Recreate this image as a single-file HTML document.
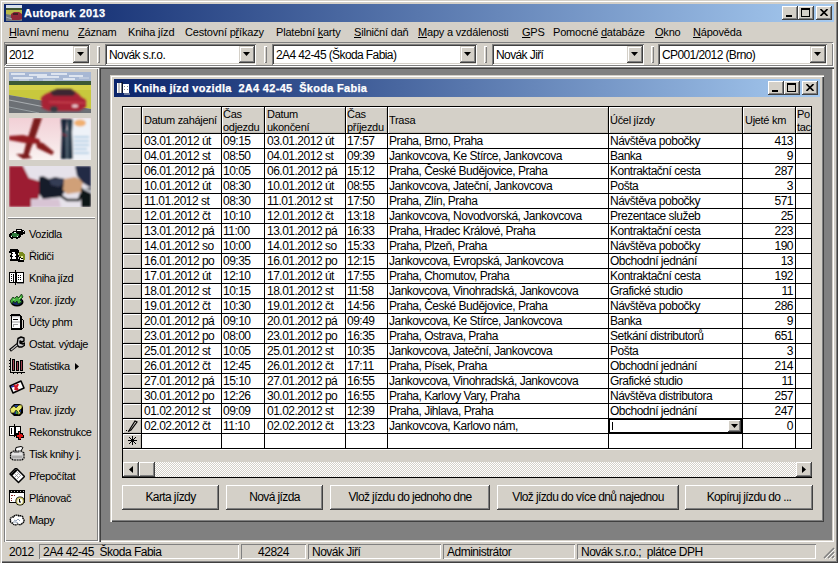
<!DOCTYPE html><html><head><meta charset="utf-8"><style>
*{box-sizing:border-box;margin:0;padding:0}
html,body{width:838px;height:563px;overflow:hidden}
body{position:relative;background:#D4D0C8;font-family:"Liberation Sans",sans-serif;font-size:11px;color:#000}
.a{position:absolute}
.t{position:absolute;white-space:nowrap;line-height:13px;font-size:12px;letter-spacing:-0.5px}
.rb{position:absolute;background:#D4D0C8;box-shadow:inset -1px -1px #404040,inset 1px 1px #fff,inset -2px -2px #808080}
.rb2{position:absolute;background:#D4D0C8;box-shadow:inset -1px -1px #404040,inset 1px 1px #D4D0C8,inset -2px -2px #808080,inset 2px 2px #fff}
.cmb{position:absolute;background:#fff;box-shadow:inset 1px 1px #808080,inset -1px -1px #fff,inset 2px 2px #404040,inset -2px -2px #D4D0C8}
.grip{position:absolute;width:3px;box-shadow:inset 1px 1px #fff,inset -1px -1px #808080}
.ln{position:absolute;background:#000}
.w{color:#fff}
.u{position:absolute;height:1px;background:#000}
</style></head><body>
<div class="a" style="left:0px;top:0px;width:838px;height:563px;box-shadow:inset 1px 1px #D4D0C8,inset 2px 2px #fff,inset -1px -1px #404040,inset -2px -2px #808080"></div>
<div class="a" style="left:4px;top:4px;width:830px;height:18px;background:linear-gradient(to right,#0A246A,#A6CAF0)"></div>
<svg class="a" style="left:6px;top:5px" width="16" height="16" viewBox="0 0 16 16"><rect width="16" height="16" fill="#707880"/><rect width="16" height="3" fill="#d8e0ec"/><rect y="3" width="16" height="2" fill="#3a5030"/><path d="M0 5H16V12L0 9Z" fill="#b8b848"/><path d="M5 9L8 7H13L16 9V14L13 15H6L5 13Z" fill="#902838"/><path d="M7 8h5v2H7z" fill="#402028"/><path d="M0 12L6 14" stroke="#a0a8b0"/></svg>
<div class="t" style="left:24px;top:6px;color:#fff;font-weight:bold;font-size:11px;line-height:14px;letter-spacing:0.45px;-webkit-text-stroke:0.25px #fff">Autopark 2013</div>
<div class="rb" style="left:782px;top:6px;width:16px;height:14px"></div>
<div class="a" style="left:786px;top:15px;width:6px;height:2px;background:#000"></div>
<div class="rb" style="left:798px;top:6px;width:16px;height:14px"></div>
<div class="a" style="left:801px;top:8px;width:9px;height:9px;border:1px solid #000;border-top-width:2px"></div>
<div class="rb" style="left:816px;top:6px;width:16px;height:14px"></div>
<svg class="a" style="left:820px;top:9px" width="8" height="7" viewBox="0 0 8 7"><path d="M0.5 0 L7.5 7 M7.5 0 L0.5 7" stroke="#000" stroke-width="1.6"/></svg>
<div class="t" style="left:9px;top:26px;font-size:11px;letter-spacing:-0.2px"><span style="text-decoration:underline;text-underline-offset:1px">H</span>lavní menu</div>
<div class="t" style="left:78px;top:26px;font-size:11px;letter-spacing:-0.2px"><span style="text-decoration:underline;text-underline-offset:1px">Z</span>áznam</div>
<div class="t" style="left:128px;top:26px;font-size:11px;letter-spacing:-0.2px">Kniha <span style="text-decoration:underline;text-underline-offset:1px">j</span>ízd</div>
<div class="t" style="left:185px;top:26px;font-size:11px;letter-spacing:-0.2px">Cestovní p<span style="text-decoration:underline;text-underline-offset:1px">ř</span>íkazy</div>
<div class="t" style="left:276px;top:26px;font-size:11px;letter-spacing:-0.2px">Platební <span style="text-decoration:underline;text-underline-offset:1px">k</span>arty</div>
<div class="t" style="left:354px;top:26px;font-size:11px;letter-spacing:-0.2px"><span style="text-decoration:underline;text-underline-offset:1px">S</span>ilniční daň</div>
<div class="t" style="left:418px;top:26px;font-size:11px;letter-spacing:-0.2px"><span style="text-decoration:underline;text-underline-offset:1px">M</span>apy a vzdálenosti</div>
<div class="t" style="left:522px;top:26px;font-size:11px;letter-spacing:-0.2px"><span style="text-decoration:underline;text-underline-offset:1px">G</span>PS</div>
<div class="t" style="left:553px;top:26px;font-size:11px;letter-spacing:-0.2px">Pomocné <span style="text-decoration:underline;text-underline-offset:1px">d</span>atabáze</div>
<div class="t" style="left:655px;top:26px;font-size:11px;letter-spacing:-0.2px"><span style="text-decoration:underline;text-underline-offset:1px">O</span>kno</div>
<div class="t" style="left:693px;top:26px;font-size:11px;letter-spacing:-0.2px"><span style="text-decoration:underline;text-underline-offset:1px">N</span>ápověda</div>
<div class="a" style="left:4px;top:42px;width:829px;height:24px;border:1px solid #808080"></div>
<div class="a" style="left:5px;top:43px;width:829px;height:24px;border:1px solid #fff;border-right-color:#fff"></div>
<div class="a" style="left:5px;top:43px;width:827px;height:22px;border:0;background:#D4D0C8"></div>
<div class="cmb" style="left:5px;top:44px;width:85px;height:21px"></div>
<div class="t" style="left:9px;top:49px;letter-spacing:-0.6px">2012</div>
<div class="rb2" style="left:73px;top:46px;width:16px;height:17px"></div>
<svg class="a" style="left:77px;top:52px" width="7" height="4" viewBox="0 0 7 4"><path d="M0 0H7L3.5 4Z" fill="#000"/></svg>
<div class="grip" style="left:97px;top:46px;height:17px"></div>
<div class="cmb" style="left:105px;top:44px;width:151px;height:21px"></div>
<div class="t" style="left:109px;top:49px;letter-spacing:-0.6px">Novák s.r.o.</div>
<div class="rb2" style="left:239px;top:46px;width:16px;height:17px"></div>
<svg class="a" style="left:243px;top:52px" width="7" height="4" viewBox="0 0 7 4"><path d="M0 0H7L3.5 4Z" fill="#000"/></svg>
<div class="grip" style="left:264px;top:46px;height:17px"></div>
<div class="cmb" style="left:272px;top:44px;width:205px;height:21px"></div>
<div class="t" style="left:276px;top:49px;letter-spacing:-0.6px">2A4 42-45 (Škoda Fabia)</div>
<div class="rb2" style="left:460px;top:46px;width:16px;height:17px"></div>
<svg class="a" style="left:464px;top:52px" width="7" height="4" viewBox="0 0 7 4"><path d="M0 0H7L3.5 4Z" fill="#000"/></svg>
<div class="grip" style="left:484px;top:46px;height:17px"></div>
<div class="cmb" style="left:492px;top:44px;width:152px;height:21px"></div>
<div class="t" style="left:496px;top:49px;letter-spacing:-0.6px">Novák Jiří</div>
<div class="rb2" style="left:627px;top:46px;width:16px;height:17px"></div>
<svg class="a" style="left:631px;top:52px" width="7" height="4" viewBox="0 0 7 4"><path d="M0 0H7L3.5 4Z" fill="#000"/></svg>
<div class="grip" style="left:651px;top:46px;height:17px"></div>
<div class="cmb" style="left:658px;top:44px;width:169px;height:21px"></div>
<div class="t" style="left:662px;top:49px;letter-spacing:-0.6px">CP001/2012 (Brno)</div>
<div class="rb2" style="left:810px;top:46px;width:16px;height:17px"></div>
<svg class="a" style="left:814px;top:52px" width="7" height="4" viewBox="0 0 7 4"><path d="M0 0H7L3.5 4Z" fill="#000"/></svg>
<div class="a" style="left:4px;top:67px;width:95px;height:475px;box-shadow:inset 1px 1px #808080,inset -1px -1px #fff,inset 2px 2px #fff,inset -2px -2px #808080"></div>
<svg class="a" style="left:9px;top:72px" width="82" height="41" viewBox="0 0 82 41"><defs><filter id="b1" x="-10%" y="-10%" width="120%" height="120%"><feGaussianBlur stdDeviation="0.9"/></filter><filter id="b2"><feGaussianBlur stdDeviation="0.6"/></filter></defs><rect width="82" height="41" fill="#c8d0dc"/><g filter="url(#b2)"><rect x="0" y="0" width="82" height="10" fill="#a8b8d4"/><path d="M2 2h14M20 3h18M42 2h16M60 4h14M4 6h20M28 5h22M54 7h12" stroke="#eef2f8" stroke-width="1.6"/><path d="M10 8h10M34 8h12M70 6h10" stroke="#d0d8e4" stroke-width="1.2"/><rect x="0" y="9" width="82" height="4" fill="#3e5a36"/><path d="M0 13H82V37L0 23Z" fill="#c8c83c"/><path d="M0 13H82V18H0Z" fill="#d8d450" opacity=".7"/><path d="M0 23L82 37V41H0Z" fill="#6c7074"/><path d="M0 28L36 35" stroke="#a8acb0" stroke-width="1.2"/><path d="M0 35L30 41" stroke="#98a0a4" stroke-width="1"/></g><g filter="url(#b1)"><path d="M32 26C35 22 42 19 50 18L62 18C66 19 70 22 72 25L77 28L77 35L70 39L40 39L33 36Z" fill="#a82434"/><path d="M41 20L48 17L62 17L67 21L64 24L44 24Z" fill="#3c2830"/><path d="M40 30L76 31" stroke="#c84050" stroke-width="1.5"/><ellipse cx="66" cy="34" rx="3" ry="1.5" fill="#f0d0d8"/><ellipse cx="45" cy="37" rx="4" ry="3" fill="#383840"/></g></svg>
<svg class="a" style="left:9px;top:118px" width="82" height="42" viewBox="0 0 82 42"><defs><linearGradient id="pg" x1="0" y1="0" x2="0" y2="1"><stop offset="0" stop-color="#f2d0d6"/><stop offset=".6" stop-color="#f6e4e6"/><stop offset="1" stop-color="#faf4f2"/></linearGradient><filter id="b3" x="-5%" y="-5%" width="110%" height="110%"><feGaussianBlur stdDeviation="0.85"/></filter></defs><rect width="82" height="42" fill="url(#pg)"/><g filter="url(#b3)"><rect x="63" y="0" width="19" height="42" fill="#eef2f8"/><ellipse cx="71" cy="5" rx="6" ry="3.5" fill="#f0b070"/><path d="M65 19H80M65 23H80M65 27H80M65 31H78M65 35H80" stroke="#a8c8e0" stroke-width="1.6"/><path d="M25 0L33 0L26 20L22 30L19 39L14 38L17 26Z" fill="#7a1a1a"/><path d="M0 18L14 17L30 21L32 26L16 25L0 22Z" fill="#941f22"/><path d="M27 24L34 25L45 34L43 37L28 30Z" fill="#841c1e"/><path d="M7 36L18 36L23 40L14 41Z" fill="#7a1a1a"/><path d="M52 1L58 1L57 12L58 41L52 41L53 14Z" fill="#162434"/><path d="M58 1L64 1L63 14L64 41L58 41L59 14Z" fill="#243444"/><path d="M56 12L60 12L59 41L57 41Z" fill="#506070"/><path d="M54 16L58 18" stroke="#803040" stroke-width="1.5"/></g></svg>
<svg class="a" style="left:9px;top:166px" width="82" height="41" viewBox="0 0 82 41"><rect width="82" height="41" fill="#e6e2ea"/><g filter="url(#b3)"><rect width="82" height="41" fill="#e6e2ea"/><path d="M0 0H14L20 12L30 15L30 32L22 36V41H0Z" fill="#9c1a32"/><path d="M22 33L50 33L52 41L22 41Z" fill="#d8c4d4"/><path d="M30 11L34 10L40 13L46 11L56 13L57 24L52 31L34 33L30 28Z" fill="#181c2c"/><path d="M40 13L52 12L56 16L50 21L42 19Z" fill="#343c54"/><path d="M55 13L66 11L74 15L72 26L58 28L54 24Z" fill="#d0a078"/><path d="M66 0H82V22L74 17L68 10Z" fill="#222a44"/><path d="M72 22L82 22V41H72Z" fill="#101418"/><path d="M52 30L58 34L70 34L72 28L76 26" stroke="#101418" stroke-width="2.5" fill="none"/><path d="M74 22L82 26" stroke="#d0d4dc" stroke-width="2"/></g></svg>
<div class="a" style="left:8px;top:217px;width:87px;height:1px;background:#fff"></div>
<div class="a" style="left:8px;top:218px;width:87px;height:1px;background:#808080"></div>
<div class="t" style="left:29px;top:228px;font-size:11px;letter-spacing:-0.4px">Vozidla</div>
<div class="t" style="left:29px;top:250px;font-size:11px;letter-spacing:-0.4px">Řidiči</div>
<div class="t" style="left:29px;top:272px;font-size:11px;letter-spacing:-0.4px">Kniha jízd</div>
<div class="t" style="left:29px;top:294px;font-size:11px;letter-spacing:-0.4px">Vzor. jízdy</div>
<div class="t" style="left:29px;top:316px;font-size:11px;letter-spacing:-0.4px">Účty phm</div>
<div class="t" style="left:29px;top:338px;font-size:11px;letter-spacing:-0.4px">Ostat. výdaje</div>
<div class="t" style="left:29px;top:360px;font-size:11px;letter-spacing:-0.4px">Statistika</div>
<div class="t" style="left:29px;top:382px;font-size:11px;letter-spacing:-0.4px">Pauzy</div>
<div class="t" style="left:29px;top:404px;font-size:11px;letter-spacing:-0.4px">Prav. jízdy</div>
<div class="t" style="left:29px;top:426px;font-size:11px;letter-spacing:-0.4px">Rekonstrukce</div>
<div class="t" style="left:29px;top:448px;font-size:11px;letter-spacing:-0.4px">Tisk knihy j.</div>
<div class="t" style="left:29px;top:470px;font-size:11px;letter-spacing:-0.4px">Přepočítat</div>
<div class="t" style="left:29px;top:492px;font-size:11px;letter-spacing:-0.4px">Plánovač</div>
<div class="t" style="left:29px;top:514px;font-size:11px;letter-spacing:-0.4px">Mapy</div>
<svg class="a" style="left:75px;top:363px" width="4" height="7" viewBox="0 0 4 7"><path d="M0 0V7L4 3.5Z" fill="#000"/></svg>
<svg class="a" style="left:9px;top:226px" width="16" height="16" viewBox="0 0 16 16"><g shape-rendering="crispEdges"><path d="M7 3h6v1h2v1h1v3h-2v1h-3v-1H8v-1H6V5h1z" fill="#000"/><path d="M8 4h4v1H8zM14 5h1v1h-1z" fill="#fff"/><path d="M4 5h3v1h3v1h1v1h1v3h-1v1H9v1H7v-1H4v1H2v-1H1v-1H0V8h1V7h2V6h1z" fill="#000"/><path d="M3 7h5v1h2v2H8v1H4v-1H2V9h1z" fill="#2f7a3c"/><path d="M5 6h2v1H5zM2 10h1v1H2zM8 10h1v1H8z" fill="#fff"/></g></svg>
<svg class="a" style="left:9px;top:248px" width="16" height="16" viewBox="0 0 16 16"><g shape-rendering="crispEdges"><path d="M1 1h8v1h1v3H9v2h1v2H9v2h1v2H1v-2h1V9H1V7h1V5H0V3h1z" fill="#000"/><path d="M3 4h3v2h1v2H6v1h1v2H3V9h1V8H3V6h1V5H3z" fill="#fff"/><path d="M10 4h4v1h1v1h1v6h-2v-1h-2v-1h-1V8H10z" fill="#7a8a1e"/><path d="M10 9h2v1h2v2h1v2H9v-2h1z" fill="#000"/><path d="M11 10h1v1h2v1h-3z" fill="#fff"/><path d="M12 8h2v2h-2z" fill="#e8f0a0"/></g></svg>
<svg class="a" style="left:9px;top:270px" width="16" height="16" viewBox="0 0 16 16"><g shape-rendering="crispEdges"><path d="M0 2h6V0h1v2h8v11H7v2H6v-2H0z" fill="#000"/><path d="M1 3h5v9H1zM8 3h6v9H8z" fill="#fff"/><path d="M2 4h1v1H2zM2 6h1v1H2zM2 8h1v1H2zM2 10h1v1H2zM4 4h1v8H4z" fill="#000"/><path d="M9 5h1v1H9zM11 5h1v1h-1zM9 7h1v1H9zM11 7h1v1h-1zM9 9h1v1H9zM11 9h1v1h-1z" fill="#000"/><path d="M8 13h7v1H8z" fill="#808080"/></g></svg>
<svg class="a" style="left:9px;top:292px" width="16" height="16" viewBox="0 0 16 16"><ellipse cx="8" cy="10" rx="6.5" ry="4.5" fill="#000"/><ellipse cx="8" cy="9.5" rx="5" ry="3.5" fill="#18286c"/><path d="M1 9l3-4 1.5 1.5L8 4l1.5 2 3-4 1.5 3-3 3 2 2-4 2-1-3-2 2-1.5-2L3 12z" fill="#48b040" stroke="#0c300c" stroke-width=".8" stroke-linejoin="round"/><path d="M4 8l2-1M10 7l2-2" stroke="#a8f090" stroke-width=".9"/></svg>
<svg class="a" style="left:9px;top:314px" width="16" height="16" viewBox="0 0 16 16"><g shape-rendering="crispEdges"><path d="M2 0h9v1h1v1h1v14H2V2h-1V1h1z" fill="#000"/><path d="M3 2h8v1H3z" fill="#c8c8c8"/><path d="M3 4h8v3H3zM3 9h8v5H3z" fill="#fff"/><path d="M4 5h5v1H4z" fill="#000"/><path d="M4 10h1v3H4zM5 10h4v1H5z" fill="#a0a0a0"/><path d="M3 7h8v2H3z" fill="#d0d0d0"/><path d="M3 3h8v1H3z" fill="#e8e8e8"/><path d="M13 5h1v1h1v8h-1v1h-1v-1h1V6h-1z" fill="#000"/></g></svg>
<svg class="a" style="left:9px;top:336px" width="16" height="16" viewBox="0 0 16 16"><path d="M9 2.5l3-1.5 3 1v3l-2 1-2-1v2l3 1 2-1v2l-3 2h-3l-2-2z" fill="#c8c8c8" stroke="#000" stroke-width="1.4" stroke-linejoin="round"/><path d="M8.5 8.5L1 14.5" stroke="#000" stroke-width="3"/><path d="M8 9L2 14" stroke="#c0c0c0" stroke-width="1.2"/></svg>
<svg class="a" style="left:9px;top:358px" width="16" height="16" viewBox="0 0 16 16"><g shape-rendering="crispEdges"><path d="M1 0h1v14h14v1H1z" fill="#000"/><path d="M0 2h1v1H0zM0 5h1v1H0zM0 8h1v1H0zM0 11h1v1H0zM4 15h1v1H4zM8 15h1v1H8zM12 15h1v1h-1z" fill="#000"/><path d="M3 1h3v12H3zM7 3h3v10H7zM11 2h3v11h-3z" fill="#000"/><path d="M4 2h1v10H4zM8 4h1v8H8zM12 3h1v9h-1z" fill="#a04050"/></g></svg>
<svg class="a" style="left:9px;top:380px" width="16" height="16" viewBox="0 0 16 16"><path d="M1 6l11-5 3 7-11 5z" fill="#fff" stroke="#000" stroke-width="1.6" stroke-linejoin="round"/><path d="M5 5l4 5M9 4l-3 6" stroke="#d01828" stroke-width="2.2"/><path d="M2 7l3-1" stroke="#2030a0" stroke-width="1.5"/></svg>
<svg class="a" style="left:9px;top:402px" width="16" height="16" viewBox="0 0 16 16"><path d="M5 2h6l3 3v6l-3 3H5l-3-3V5z" fill="#000"/><path d="M6 3h4l2 2v5l-2 2H6L4 10V5z" fill="#1c3c90"/><path d="M7 6h2v6H7z" fill="#40a040"/><path d="M1 7l4-3 2 2 3-3h3v3l-3 3 2 2-3 2v-3l-2-2-2 3H2z" fill="#e8e868"/><path d="M1 7l4-3 2 2 3-3h3v3l-3 3 2 2-3 2v-3l-2-2-2 3H2z" fill="none" stroke="#202000" stroke-width=".7"/></svg>
<svg class="a" style="left:9px;top:424px" width="16" height="16" viewBox="0 0 16 16"><g shape-rendering="crispEdges"><path d="M0 2h5V0h1v2h6v10H6v1H5v-1H0z" fill="#000"/><path d="M1 3h4v8H1zM7 3h4v6H7z" fill="#fff"/><path d="M2 4h1v6H2z" fill="#000"/><path d="M9 7h3v2h2v2h1v3h-3v2h-3v-2H7v-3h2z" fill="#000"/><path d="M10 8h1v2h2v1h1v2h-2v2h-2v-2H8v-2h2z" fill="#e01818"/></g></svg>
<svg class="a" style="left:9px;top:446px" width="16" height="16" viewBox="0 0 16 16"><path d="M7 1.5l5-1 2 1-3 5H6z" fill="#fff" stroke="#000" stroke-width="1"/><path d="M1.5 7l3-2h8l2.5 2v5l-2 2h-9l-2.5-2z" fill="#c8c8c8" stroke="#000" stroke-width="1.2" stroke-dasharray="2 .6"/><path d="M3 8h10" stroke="#fff"/><path d="M3 11h10" stroke="#909090"/><path d="M5 6h5" stroke="#404040"/></svg>
<svg class="a" style="left:9px;top:468px" width="16" height="16" viewBox="0 0 16 16"><path d="M1 6l6-6 8.5 8.5-6 6z" fill="#fff" stroke="#000" stroke-width="1.5" stroke-linejoin="round"/><path d="M1.5 6.5l5.5-5.5 1.5 1.5-5.5 5.5z" fill="#000"/><path d="M6 9l3-3M8 11l3-3M6 6l4 4M8 4l4 4" stroke="#909090" stroke-width=".8"/></svg>
<svg class="a" style="left:9px;top:490px" width="16" height="16" viewBox="0 0 16 16"><g shape-rendering="crispEdges"><path d="M0 0h16v13H0z" fill="#000"/><path d="M1 3h14v9H1z" fill="#fff"/><path d="M2 1h1v1H2zM5 1h1v1H5zM8 1h1v1H8zM11 1h1v1h-1zM14 1h1v1h-1z" fill="#c0c0c0"/><path d="M2 5h2v1H2zM5 5h1v1H5zM2 8h1v1H2zM2 10h1v1H2z" fill="#802020"/></g><circle cx="11" cy="11" r="4.6" fill="#000"/><circle cx="11" cy="11" r="3.8" fill="#d8d070"/><circle cx="11" cy="11.3" r="2.6" fill="#fff"/><path d="M10.5 9v3h1.5" stroke="#000" stroke-width="1.1" fill="none"/></svg>
<svg class="a" style="left:9px;top:512px" width="16" height="16" viewBox="0 0 16 16"><path d="M1.5 8.5c-1-2 1-4 3-3.5 1-2 4-2.5 5.5-1 2-1 4.5 0.5 4 2.5 1.5 1 1.5 3.5-0.5 4.5-1 2-3.5 2-5 1-2 1.5-4.5 1-5-1-2 0-2.5-2-2-2.5z" fill="#fff" stroke="#000" stroke-width="1.4" stroke-dasharray="1.6 .5"/><path d="M5 8l2 1 2-2 2 2M4 10h3l2 1" stroke="#8898b0" fill="none" stroke-width=".9"/></svg>
<div class="a" style="left:99px;top:67px;width:735px;height:475px;background:#808080;box-shadow:inset 1px 1px #808080,inset 2px 2px #404040,inset -1px -1px #fff,inset -2px -2px #D4D0C8"></div>
<div class="a" style="left:110px;top:75px;width:714px;height:447px;background:#D4D0C8;box-shadow:inset 1px 1px #D4D0C8,inset 2px 2px #fff,inset -1px -1px #404040,inset -2px -2px #808080"></div>
<div class="a" style="left:114px;top:79px;width:706px;height:18px;background:linear-gradient(to right,#0A246A,#A6CAF0)"></div>
<div class="t" style="left:134px;top:81px;color:#fff;font-weight:bold;font-size:11px;line-height:14px;letter-spacing:0.3px;-webkit-text-stroke:0.25px #fff">Kniha jízd vozidla&nbsp; 2A4 42-45&nbsp; Škoda Fabia</div>
<svg class="a" style="left:116px;top:82px" width="16" height="13" viewBox="0 0 16 13"><path d="M1 1h5v10H1z" fill="#fff"/><path d="M3 1v10" stroke="#888"/><path d="M6 0v11" stroke="#000"/><path d="M7 2h6v9H7z" fill="#fff"/><path d="M8 4h1v1H8zM11 4h1v1h-1zM8 7h1v1H8zM11 7h1v1h-1z" fill="#888"/><path d="M8 12h6" stroke="#ccc"/></svg>
<div class="rb" style="left:768px;top:81px;width:16px;height:14px"></div>
<div class="a" style="left:772px;top:90px;width:6px;height:2px;background:#000"></div>
<div class="rb" style="left:784px;top:81px;width:16px;height:14px"></div>
<div class="a" style="left:787px;top:83px;width:9px;height:9px;border:1px solid #000;border-top-width:2px"></div>
<div class="rb" style="left:802px;top:81px;width:16px;height:14px"></div>
<svg class="a" style="left:806px;top:84px" width="8" height="7" viewBox="0 0 8 7"><path d="M0.5 0 L7.5 7 M7.5 0 L0.5 7" stroke="#000" stroke-width="1.6"/></svg>
<div class="a" style="left:122px;top:106px;width:690px;height:372px;overflow:hidden;background:#D4D0C8">
<div class="a" style="left:20px;top:28px;width:670px;height:314px;background:#fff"></div>
<div class="a" style="left:1px;top:1px;width:18px;height:26px;background:#D4D0C8;box-shadow:inset 1px 1px #fff,inset -1px -1px #C0BCB4"></div>
<div class="a" style="left:20px;top:1px;width:79px;height:26px;background:#D4D0C8;box-shadow:inset 1px 1px #fff,inset -1px -1px #C0BCB4"></div>
<div class="a" style="left:100px;top:1px;width:42px;height:26px;background:#D4D0C8;box-shadow:inset 1px 1px #fff,inset -1px -1px #C0BCB4"></div>
<div class="a" style="left:143px;top:1px;width:80px;height:26px;background:#D4D0C8;box-shadow:inset 1px 1px #fff,inset -1px -1px #C0BCB4"></div>
<div class="a" style="left:224px;top:1px;width:41px;height:26px;background:#D4D0C8;box-shadow:inset 1px 1px #fff,inset -1px -1px #C0BCB4"></div>
<div class="a" style="left:266px;top:1px;width:220px;height:26px;background:#D4D0C8;box-shadow:inset 1px 1px #fff,inset -1px -1px #C0BCB4"></div>
<div class="a" style="left:487px;top:1px;width:133px;height:26px;background:#D4D0C8;box-shadow:inset 1px 1px #fff,inset -1px -1px #C0BCB4"></div>
<div class="a" style="left:621px;top:1px;width:52px;height:26px;background:#D4D0C8;box-shadow:inset 1px 1px #fff,inset -1px -1px #C0BCB4"></div>
<div class="a" style="left:674px;top:1px;width:16px;height:26px;background:#D4D0C8;box-shadow:inset 1px 1px #fff,inset -1px -1px #C0BCB4"></div>
<div class="a" style="left:1px;top:28px;width:18px;height:14px;background:#D4D0C8;box-shadow:inset 1px 1px #fff,inset -1px -1px #C0BCB4"></div>
<div class="a" style="left:1px;top:43px;width:18px;height:14px;background:#D4D0C8;box-shadow:inset 1px 1px #fff,inset -1px -1px #C0BCB4"></div>
<div class="a" style="left:1px;top:58px;width:18px;height:14px;background:#D4D0C8;box-shadow:inset 1px 1px #fff,inset -1px -1px #C0BCB4"></div>
<div class="a" style="left:1px;top:73px;width:18px;height:14px;background:#D4D0C8;box-shadow:inset 1px 1px #fff,inset -1px -1px #C0BCB4"></div>
<div class="a" style="left:1px;top:88px;width:18px;height:14px;background:#D4D0C8;box-shadow:inset 1px 1px #fff,inset -1px -1px #C0BCB4"></div>
<div class="a" style="left:1px;top:103px;width:18px;height:14px;background:#D4D0C8;box-shadow:inset 1px 1px #fff,inset -1px -1px #C0BCB4"></div>
<div class="a" style="left:1px;top:118px;width:18px;height:14px;background:#D4D0C8;box-shadow:inset 1px 1px #fff,inset -1px -1px #C0BCB4"></div>
<div class="a" style="left:1px;top:133px;width:18px;height:14px;background:#D4D0C8;box-shadow:inset 1px 1px #fff,inset -1px -1px #C0BCB4"></div>
<div class="a" style="left:1px;top:148px;width:18px;height:14px;background:#D4D0C8;box-shadow:inset 1px 1px #fff,inset -1px -1px #C0BCB4"></div>
<div class="a" style="left:1px;top:163px;width:18px;height:14px;background:#D4D0C8;box-shadow:inset 1px 1px #fff,inset -1px -1px #C0BCB4"></div>
<div class="a" style="left:1px;top:178px;width:18px;height:14px;background:#D4D0C8;box-shadow:inset 1px 1px #fff,inset -1px -1px #C0BCB4"></div>
<div class="a" style="left:1px;top:193px;width:18px;height:14px;background:#D4D0C8;box-shadow:inset 1px 1px #fff,inset -1px -1px #C0BCB4"></div>
<div class="a" style="left:1px;top:208px;width:18px;height:14px;background:#D4D0C8;box-shadow:inset 1px 1px #fff,inset -1px -1px #C0BCB4"></div>
<div class="a" style="left:1px;top:223px;width:18px;height:14px;background:#D4D0C8;box-shadow:inset 1px 1px #fff,inset -1px -1px #C0BCB4"></div>
<div class="a" style="left:1px;top:238px;width:18px;height:14px;background:#D4D0C8;box-shadow:inset 1px 1px #fff,inset -1px -1px #C0BCB4"></div>
<div class="a" style="left:1px;top:253px;width:18px;height:14px;background:#D4D0C8;box-shadow:inset 1px 1px #fff,inset -1px -1px #C0BCB4"></div>
<div class="a" style="left:1px;top:268px;width:18px;height:14px;background:#D4D0C8;box-shadow:inset 1px 1px #fff,inset -1px -1px #C0BCB4"></div>
<div class="a" style="left:1px;top:283px;width:18px;height:14px;background:#D4D0C8;box-shadow:inset 1px 1px #fff,inset -1px -1px #C0BCB4"></div>
<div class="a" style="left:1px;top:298px;width:18px;height:14px;background:#D4D0C8;box-shadow:inset 1px 1px #fff,inset -1px -1px #C0BCB4"></div>
<div class="a" style="left:1px;top:313px;width:18px;height:14px;background:#D4D0C8;box-shadow:inset 1px 1px #fff,inset -1px -1px #C0BCB4"></div>
<div class="a" style="left:1px;top:328px;width:18px;height:14px;background:#D4D0C8;box-shadow:inset 1px 1px #fff,inset -1px -1px #C0BCB4"></div>
<div class="a" style="left:1px;top:343px;width:689px;height:1px;background:#fff"></div>
<div class="a" style="left:0px;top:0px;width:690px;height:1px;background:#000"></div>
<div class="a" style="left:0px;top:27px;width:690px;height:1px;background:#000"></div>
<div class="a" style="left:0px;top:42px;width:690px;height:1px;background:#000"></div>
<div class="a" style="left:0px;top:57px;width:690px;height:1px;background:#000"></div>
<div class="a" style="left:0px;top:72px;width:690px;height:1px;background:#000"></div>
<div class="a" style="left:0px;top:87px;width:690px;height:1px;background:#000"></div>
<div class="a" style="left:0px;top:102px;width:690px;height:1px;background:#000"></div>
<div class="a" style="left:0px;top:117px;width:690px;height:1px;background:#000"></div>
<div class="a" style="left:0px;top:132px;width:690px;height:1px;background:#000"></div>
<div class="a" style="left:0px;top:147px;width:690px;height:1px;background:#000"></div>
<div class="a" style="left:0px;top:162px;width:690px;height:1px;background:#000"></div>
<div class="a" style="left:0px;top:177px;width:690px;height:1px;background:#000"></div>
<div class="a" style="left:0px;top:192px;width:690px;height:1px;background:#000"></div>
<div class="a" style="left:0px;top:207px;width:690px;height:1px;background:#000"></div>
<div class="a" style="left:0px;top:222px;width:690px;height:1px;background:#000"></div>
<div class="a" style="left:0px;top:237px;width:690px;height:1px;background:#000"></div>
<div class="a" style="left:0px;top:252px;width:690px;height:1px;background:#000"></div>
<div class="a" style="left:0px;top:267px;width:690px;height:1px;background:#000"></div>
<div class="a" style="left:0px;top:282px;width:690px;height:1px;background:#000"></div>
<div class="a" style="left:0px;top:297px;width:690px;height:1px;background:#000"></div>
<div class="a" style="left:0px;top:312px;width:690px;height:1px;background:#000"></div>
<div class="a" style="left:0px;top:327px;width:690px;height:1px;background:#000"></div>
<div class="a" style="left:0px;top:342px;width:690px;height:1px;background:#000"></div>
<div class="a" style="left:0px;top:0px;width:1px;height:343px;background:#000"></div>
<div class="a" style="left:19px;top:0px;width:1px;height:343px;background:#000"></div>
<div class="a" style="left:99px;top:0px;width:1px;height:343px;background:#000"></div>
<div class="a" style="left:142px;top:0px;width:1px;height:343px;background:#000"></div>
<div class="a" style="left:223px;top:0px;width:1px;height:343px;background:#000"></div>
<div class="a" style="left:265px;top:0px;width:1px;height:343px;background:#000"></div>
<div class="a" style="left:486px;top:0px;width:1px;height:343px;background:#000"></div>
<div class="a" style="left:620px;top:0px;width:1px;height:343px;background:#000"></div>
<div class="a" style="left:673px;top:0px;width:1px;height:343px;background:#000"></div>
<div class="a" style="left:0px;top:0px;width:1px;height:372px;background:#000"></div>
<div class="a" style="left:0px;top:371px;width:690px;height:1px;background:#000"></div>
<div class="a" style="left:689px;top:0px;width:1px;height:343px;background:#000"></div>
<div class="t" style="left:22px;top:8px;font-size:11px;letter-spacing:-0.3px">Datum zahájení</div>
<div class="t" style="left:101px;top:2px;line-height:13px;font-size:11px;letter-spacing:-0.3px">Čas<br>odjezdu</div>
<div class="t" style="left:145px;top:2px;line-height:13px;font-size:11px;letter-spacing:-0.3px">Datum<br>ukončení</div>
<div class="t" style="left:225px;top:2px;line-height:13px;font-size:11px;letter-spacing:-0.3px">Čas<br>příjezdu</div>
<div class="t" style="left:267px;top:8px;font-size:11px;letter-spacing:-0.3px">Trasa</div>
<div class="t" style="left:488px;top:8px;font-size:11px;letter-spacing:-0.3px">Účel jízdy</div>
<div class="t" style="left:623px;top:8px;font-size:11px;letter-spacing:-0.3px">Ujeté km</div>
<div class="t" style="left:675px;top:2px;line-height:13px;font-size:11px;letter-spacing:-0.3px">Po<br>tac</div>
<div class="t" style="left:22px;top:29px;letter-spacing:-0.5px">03.01.2012 út</div>
<div class="t" style="left:101px;top:29px;letter-spacing:-0.5px">09:15</div>
<div class="t" style="left:145px;top:29px;letter-spacing:-0.5px">03.01.2012 út</div>
<div class="t" style="left:225px;top:29px;letter-spacing:-0.5px">17:57</div>
<div class="t" style="left:267px;top:29px;letter-spacing:-0.5px">Praha, Brno, Praha</div>
<div class="t" style="left:488px;top:29px;letter-spacing:-0.5px">Návštěva pobočky</div>
<div class="t" style="left:620px;top:29px;width:51px;text-align:right">413</div>
<div class="t" style="left:22px;top:44px;letter-spacing:-0.5px">04.01.2012 st</div>
<div class="t" style="left:101px;top:44px;letter-spacing:-0.5px">08:50</div>
<div class="t" style="left:145px;top:44px;letter-spacing:-0.5px">04.01.2012 st</div>
<div class="t" style="left:225px;top:44px;letter-spacing:-0.5px">09:39</div>
<div class="t" style="left:267px;top:44px;letter-spacing:-0.5px">Jankovcova, Ke Stírce, Jankovcova</div>
<div class="t" style="left:488px;top:44px;letter-spacing:-0.5px">Banka</div>
<div class="t" style="left:620px;top:44px;width:51px;text-align:right">9</div>
<div class="t" style="left:22px;top:59px;letter-spacing:-0.5px">06.01.2012 pá</div>
<div class="t" style="left:101px;top:59px;letter-spacing:-0.5px">10:05</div>
<div class="t" style="left:145px;top:59px;letter-spacing:-0.5px">06.01.2012 pá</div>
<div class="t" style="left:225px;top:59px;letter-spacing:-0.5px">15:12</div>
<div class="t" style="left:267px;top:59px;letter-spacing:-0.5px">Praha, České Budějovice, Praha</div>
<div class="t" style="left:488px;top:59px;letter-spacing:-0.5px">Kontraktační cesta</div>
<div class="t" style="left:620px;top:59px;width:51px;text-align:right">287</div>
<div class="t" style="left:22px;top:74px;letter-spacing:-0.5px">10.01.2012 út</div>
<div class="t" style="left:101px;top:74px;letter-spacing:-0.5px">08:30</div>
<div class="t" style="left:145px;top:74px;letter-spacing:-0.5px">10.01.2012 út</div>
<div class="t" style="left:225px;top:74px;letter-spacing:-0.5px">08:55</div>
<div class="t" style="left:267px;top:74px;letter-spacing:-0.5px">Jankovcova, Jateční, Jankovcova</div>
<div class="t" style="left:488px;top:74px;letter-spacing:-0.5px">Pošta</div>
<div class="t" style="left:620px;top:74px;width:51px;text-align:right">3</div>
<div class="t" style="left:22px;top:89px;letter-spacing:-0.5px">11.01.2012 st</div>
<div class="t" style="left:101px;top:89px;letter-spacing:-0.5px">08:30</div>
<div class="t" style="left:145px;top:89px;letter-spacing:-0.5px">11.01.2012 st</div>
<div class="t" style="left:225px;top:89px;letter-spacing:-0.5px">17:50</div>
<div class="t" style="left:267px;top:89px;letter-spacing:-0.5px">Praha, Zlín, Praha</div>
<div class="t" style="left:488px;top:89px;letter-spacing:-0.5px">Návštěva pobočky</div>
<div class="t" style="left:620px;top:89px;width:51px;text-align:right">571</div>
<div class="t" style="left:22px;top:104px;letter-spacing:-0.5px">12.01.2012 čt</div>
<div class="t" style="left:101px;top:104px;letter-spacing:-0.5px">10:10</div>
<div class="t" style="left:145px;top:104px;letter-spacing:-0.5px">12.01.2012 čt</div>
<div class="t" style="left:225px;top:104px;letter-spacing:-0.5px">13:18</div>
<div class="t" style="left:267px;top:104px;letter-spacing:-0.5px">Jankovcova, Novodvorská, Jankovcova</div>
<div class="t" style="left:488px;top:104px;letter-spacing:-0.5px">Prezentace služeb</div>
<div class="t" style="left:620px;top:104px;width:51px;text-align:right">25</div>
<div class="t" style="left:22px;top:119px;letter-spacing:-0.5px">13.01.2012 pá</div>
<div class="t" style="left:101px;top:119px;letter-spacing:-0.5px">11:00</div>
<div class="t" style="left:145px;top:119px;letter-spacing:-0.5px">13.01.2012 pá</div>
<div class="t" style="left:225px;top:119px;letter-spacing:-0.5px">16:33</div>
<div class="t" style="left:267px;top:119px;letter-spacing:-0.5px">Praha, Hradec Králové, Praha</div>
<div class="t" style="left:488px;top:119px;letter-spacing:-0.5px">Kontraktační cesta</div>
<div class="t" style="left:620px;top:119px;width:51px;text-align:right">223</div>
<div class="t" style="left:22px;top:134px;letter-spacing:-0.5px">14.01.2012 so</div>
<div class="t" style="left:101px;top:134px;letter-spacing:-0.5px">10:00</div>
<div class="t" style="left:145px;top:134px;letter-spacing:-0.5px">14.01.2012 so</div>
<div class="t" style="left:225px;top:134px;letter-spacing:-0.5px">15:33</div>
<div class="t" style="left:267px;top:134px;letter-spacing:-0.5px">Praha, Plzeň, Praha</div>
<div class="t" style="left:488px;top:134px;letter-spacing:-0.5px">Návštěva pobočky</div>
<div class="t" style="left:620px;top:134px;width:51px;text-align:right">190</div>
<div class="t" style="left:22px;top:149px;letter-spacing:-0.5px">16.01.2012 po</div>
<div class="t" style="left:101px;top:149px;letter-spacing:-0.5px">09:35</div>
<div class="t" style="left:145px;top:149px;letter-spacing:-0.5px">16.01.2012 po</div>
<div class="t" style="left:225px;top:149px;letter-spacing:-0.5px">12:15</div>
<div class="t" style="left:267px;top:149px;letter-spacing:-0.5px">Jankovcova, Evropská, Jankovcova</div>
<div class="t" style="left:488px;top:149px;letter-spacing:-0.5px">Obchodní jednání</div>
<div class="t" style="left:620px;top:149px;width:51px;text-align:right">13</div>
<div class="t" style="left:22px;top:164px;letter-spacing:-0.5px">17.01.2012 út</div>
<div class="t" style="left:101px;top:164px;letter-spacing:-0.5px">12:10</div>
<div class="t" style="left:145px;top:164px;letter-spacing:-0.5px">17.01.2012 út</div>
<div class="t" style="left:225px;top:164px;letter-spacing:-0.5px">17:55</div>
<div class="t" style="left:267px;top:164px;letter-spacing:-0.5px">Praha, Chomutov, Praha</div>
<div class="t" style="left:488px;top:164px;letter-spacing:-0.5px">Kontraktační cesta</div>
<div class="t" style="left:620px;top:164px;width:51px;text-align:right">192</div>
<div class="t" style="left:22px;top:179px;letter-spacing:-0.5px">18.01.2012 st</div>
<div class="t" style="left:101px;top:179px;letter-spacing:-0.5px">10:15</div>
<div class="t" style="left:145px;top:179px;letter-spacing:-0.5px">18.01.2012 st</div>
<div class="t" style="left:225px;top:179px;letter-spacing:-0.5px">11:58</div>
<div class="t" style="left:267px;top:179px;letter-spacing:-0.5px">Jankovcova, Vinohradská, Jankovcova</div>
<div class="t" style="left:488px;top:179px;letter-spacing:-0.5px">Grafické studio</div>
<div class="t" style="left:620px;top:179px;width:51px;text-align:right">11</div>
<div class="t" style="left:22px;top:194px;letter-spacing:-0.5px">19.01.2012 čt</div>
<div class="t" style="left:101px;top:194px;letter-spacing:-0.5px">10:30</div>
<div class="t" style="left:145px;top:194px;letter-spacing:-0.5px">19.01.2012 čt</div>
<div class="t" style="left:225px;top:194px;letter-spacing:-0.5px">14:56</div>
<div class="t" style="left:267px;top:194px;letter-spacing:-0.5px">Praha, České Budějovice, Praha</div>
<div class="t" style="left:488px;top:194px;letter-spacing:-0.5px">Návštěva pobočky</div>
<div class="t" style="left:620px;top:194px;width:51px;text-align:right">286</div>
<div class="t" style="left:22px;top:209px;letter-spacing:-0.5px">20.01.2012 pá</div>
<div class="t" style="left:101px;top:209px;letter-spacing:-0.5px">09:10</div>
<div class="t" style="left:145px;top:209px;letter-spacing:-0.5px">20.01.2012 pá</div>
<div class="t" style="left:225px;top:209px;letter-spacing:-0.5px">09:49</div>
<div class="t" style="left:267px;top:209px;letter-spacing:-0.5px">Jankovcova, Ke Stírce, Jankovcova</div>
<div class="t" style="left:488px;top:209px;letter-spacing:-0.5px">Banka</div>
<div class="t" style="left:620px;top:209px;width:51px;text-align:right">9</div>
<div class="t" style="left:22px;top:224px;letter-spacing:-0.5px">23.01.2012 po</div>
<div class="t" style="left:101px;top:224px;letter-spacing:-0.5px">08:00</div>
<div class="t" style="left:145px;top:224px;letter-spacing:-0.5px">23.01.2012 po</div>
<div class="t" style="left:225px;top:224px;letter-spacing:-0.5px">16:35</div>
<div class="t" style="left:267px;top:224px;letter-spacing:-0.5px">Praha, Ostrava, Praha</div>
<div class="t" style="left:488px;top:224px;letter-spacing:-0.5px">Setkání distributorů</div>
<div class="t" style="left:620px;top:224px;width:51px;text-align:right">651</div>
<div class="t" style="left:22px;top:239px;letter-spacing:-0.5px">25.01.2012 st</div>
<div class="t" style="left:101px;top:239px;letter-spacing:-0.5px">10:05</div>
<div class="t" style="left:145px;top:239px;letter-spacing:-0.5px">25.01.2012 st</div>
<div class="t" style="left:225px;top:239px;letter-spacing:-0.5px">10:35</div>
<div class="t" style="left:267px;top:239px;letter-spacing:-0.5px">Jankovcova, Jateční, Jankovcova</div>
<div class="t" style="left:488px;top:239px;letter-spacing:-0.5px">Pošta</div>
<div class="t" style="left:620px;top:239px;width:51px;text-align:right">3</div>
<div class="t" style="left:22px;top:254px;letter-spacing:-0.5px">26.01.2012 čt</div>
<div class="t" style="left:101px;top:254px;letter-spacing:-0.5px">12:45</div>
<div class="t" style="left:145px;top:254px;letter-spacing:-0.5px">26.01.2012 čt</div>
<div class="t" style="left:225px;top:254px;letter-spacing:-0.5px">17:11</div>
<div class="t" style="left:267px;top:254px;letter-spacing:-0.5px">Praha, Písek, Praha</div>
<div class="t" style="left:488px;top:254px;letter-spacing:-0.5px">Obchodní jednání</div>
<div class="t" style="left:620px;top:254px;width:51px;text-align:right">214</div>
<div class="t" style="left:22px;top:269px;letter-spacing:-0.5px">27.01.2012 pá</div>
<div class="t" style="left:101px;top:269px;letter-spacing:-0.5px">15:10</div>
<div class="t" style="left:145px;top:269px;letter-spacing:-0.5px">27.01.2012 pá</div>
<div class="t" style="left:225px;top:269px;letter-spacing:-0.5px">16:55</div>
<div class="t" style="left:267px;top:269px;letter-spacing:-0.5px">Jankovcova, Vinohradská, Jankovcova</div>
<div class="t" style="left:488px;top:269px;letter-spacing:-0.5px">Grafické studio</div>
<div class="t" style="left:620px;top:269px;width:51px;text-align:right">11</div>
<div class="t" style="left:22px;top:284px;letter-spacing:-0.5px">30.01.2012 po</div>
<div class="t" style="left:101px;top:284px;letter-spacing:-0.5px">12:26</div>
<div class="t" style="left:145px;top:284px;letter-spacing:-0.5px">30.01.2012 po</div>
<div class="t" style="left:225px;top:284px;letter-spacing:-0.5px">16:55</div>
<div class="t" style="left:267px;top:284px;letter-spacing:-0.5px">Praha, Karlovy Vary, Praha</div>
<div class="t" style="left:488px;top:284px;letter-spacing:-0.5px">Návštěva distributora</div>
<div class="t" style="left:620px;top:284px;width:51px;text-align:right">257</div>
<div class="t" style="left:22px;top:299px;letter-spacing:-0.5px">01.02.2012 st</div>
<div class="t" style="left:101px;top:299px;letter-spacing:-0.5px">09:09</div>
<div class="t" style="left:145px;top:299px;letter-spacing:-0.5px">01.02.2012 st</div>
<div class="t" style="left:225px;top:299px;letter-spacing:-0.5px">12:39</div>
<div class="t" style="left:267px;top:299px;letter-spacing:-0.5px">Praha, Jihlava, Praha</div>
<div class="t" style="left:488px;top:299px;letter-spacing:-0.5px">Obchodní jednání</div>
<div class="t" style="left:620px;top:299px;width:51px;text-align:right">247</div>
<div class="t" style="left:22px;top:314px;letter-spacing:-0.5px">02.02.2012 čt</div>
<div class="t" style="left:101px;top:314px;letter-spacing:-0.5px">11:10</div>
<div class="t" style="left:145px;top:314px;letter-spacing:-0.5px">02.02.2012 čt</div>
<div class="t" style="left:225px;top:314px;letter-spacing:-0.5px">13:23</div>
<div class="t" style="left:267px;top:314px;letter-spacing:-0.5px">Jankovcova, Karlovo nám,</div>
<div class="t" style="left:620px;top:314px;width:51px;text-align:right">0</div>
<div class="a" style="left:486px;top:312px;width:134px;height:16px;background:#fff;border:2px solid #000"></div>
<div class="a" style="left:490px;top:316px;width:1px;height:8px;background:#000"></div>
<div class="a" style="left:606px;top:314px;width:13px;height:12px;background:#D4D0C8;box-shadow:inset -1px -1px #404040,inset 1px 1px #fff,inset -2px -2px #808080"></div>
<svg class="a" style="left:609px;top:318px" width="7" height="4" viewBox="0 0 7 4"><path d="M0 0H7L3.5 4Z" fill="#000"/></svg>
<svg class="a" style="left:3px;top:314px" width="14" height="12" viewBox="0 0 14 12"><path d="M10 1 L12 2 L6 10 L4 11 L5 9 Z" fill="none" stroke="#000" stroke-width="1.2"/><rect x="1" y="10" width="1" height="1" fill="#000"/><rect x="3" y="10.5" width="1" height="1" fill="#000"/></svg>
<svg class="a" style="left:6px;top:330px" width="9" height="9" viewBox="0 0 9 9" shape-rendering="crispEdges"><path d="M4 0h1v9H4zM0 4h9v1H0zM1 1h1v1H1zM2 2h1v1H2zM3 3h1v1H3zM5 5h1v1H5zM6 6h1v1H6zM7 7h1v1H7zM7 1h1v1H7zM6 2h1v1H6zM5 3h1v1H5zM3 5h1v1H3zM2 6h1v1H2zM1 7h1v1H1z" fill="#000"/></svg>
<div class="a" style="left:1px;top:356px;width:689px;height:15px;background-color:#ECEAE6;background-image:repeating-conic-gradient(#fff 0 25%,#D4D0C8 0 50%);background-size:2px 2px"></div>
<div class="a" style="left:1px;top:356px;width:16px;height:15px;background:#D4D0C8;box-shadow:inset -1px -1px #404040,inset 1px 1px #fff,inset -2px -2px #808080"></div>
<svg class="a" style="left:7px;top:360px" width="4" height="7" viewBox="0 0 4 7"><path d="M4 0V7L0 3.5Z" fill="#000"/></svg>
<div class="a" style="left:17px;top:356px;width:16px;height:15px;background:#D4D0C8;box-shadow:inset -1px -1px #404040,inset 1px 1px #fff,inset -2px -2px #808080"></div>
<div class="a" style="left:674px;top:356px;width:16px;height:15px;background:#D4D0C8;box-shadow:inset -1px -1px #404040,inset 1px 1px #fff,inset -2px -2px #808080"></div>
<svg class="a" style="left:680px;top:360px" width="4" height="7" viewBox="0 0 4 7"><path d="M0 0V7L4 3.5Z" fill="#000"/></svg>
</div>
<div class="rb" style="left:122px;top:485px;width:97px;height:25px"></div>
<div class="t" style="left:122px;top:491px;width:97px;text-align:center;letter-spacing:-0.6px">Karta jízdy</div>
<div class="rb" style="left:226px;top:485px;width:97px;height:25px"></div>
<div class="t" style="left:226px;top:491px;width:97px;text-align:center;letter-spacing:-0.6px">Nová jízda</div>
<div class="rb" style="left:330px;top:485px;width:160px;height:25px"></div>
<div class="t" style="left:330px;top:491px;width:160px;text-align:center;letter-spacing:-0.6px">Vlož jízdu do jednoho dne</div>
<div class="rb" style="left:497px;top:485px;width:182px;height:25px"></div>
<div class="t" style="left:497px;top:491px;width:182px;text-align:center;letter-spacing:-0.6px">Vlož jízdu do více dnů najednou</div>
<div class="rb" style="left:685px;top:485px;width:128px;height:25px"></div>
<div class="t" style="left:685px;top:491px;width:128px;text-align:center;letter-spacing:-0.6px">Kopíruj jízdu do ...</div>
<div class="t" style="left:9px;top:546px;">2012</div>
<div class="a" style="left:39px;top:544px;width:200px;height:15px;box-shadow:inset 1px 1px #808080,inset -1px -1px #fff"></div>
<div class="t" style="left:43px;top:546px;">2A4 42-45&nbsp; Škoda Fabia</div>
<div class="a" style="left:241px;top:544px;width:65px;height:15px;box-shadow:inset 1px 1px #808080,inset -1px -1px #fff"></div>
<div class="t" style="left:241px;top:546px;width:65px;text-align:center">42824</div>
<div class="a" style="left:308px;top:544px;width:133px;height:15px;box-shadow:inset 1px 1px #808080,inset -1px -1px #fff"></div>
<div class="t" style="left:312px;top:546px;">Novák Jiří</div>
<div class="a" style="left:443px;top:544px;width:132px;height:15px;box-shadow:inset 1px 1px #808080,inset -1px -1px #fff"></div>
<div class="t" style="left:447px;top:546px;">Administrátor</div>
<div class="a" style="left:577px;top:544px;width:239px;height:15px;box-shadow:inset 1px 1px #808080,inset -1px -1px #fff"></div>
<div class="t" style="left:581px;top:546px;">Novák s.r.o.;&nbsp; plátce DPH</div>
<svg class="a" style="left:823px;top:547px" width="12" height="12" viewBox="0 0 12 12"><path d="M11 1L1 11M11 5L5 11M11 9L9 11" stroke="#808080" stroke-width="1.5"/><path d="M12 2L2 12M12 6L6 12M12 10L10 12" stroke="#fff" stroke-width="0.8"/></svg>
</body></html>
